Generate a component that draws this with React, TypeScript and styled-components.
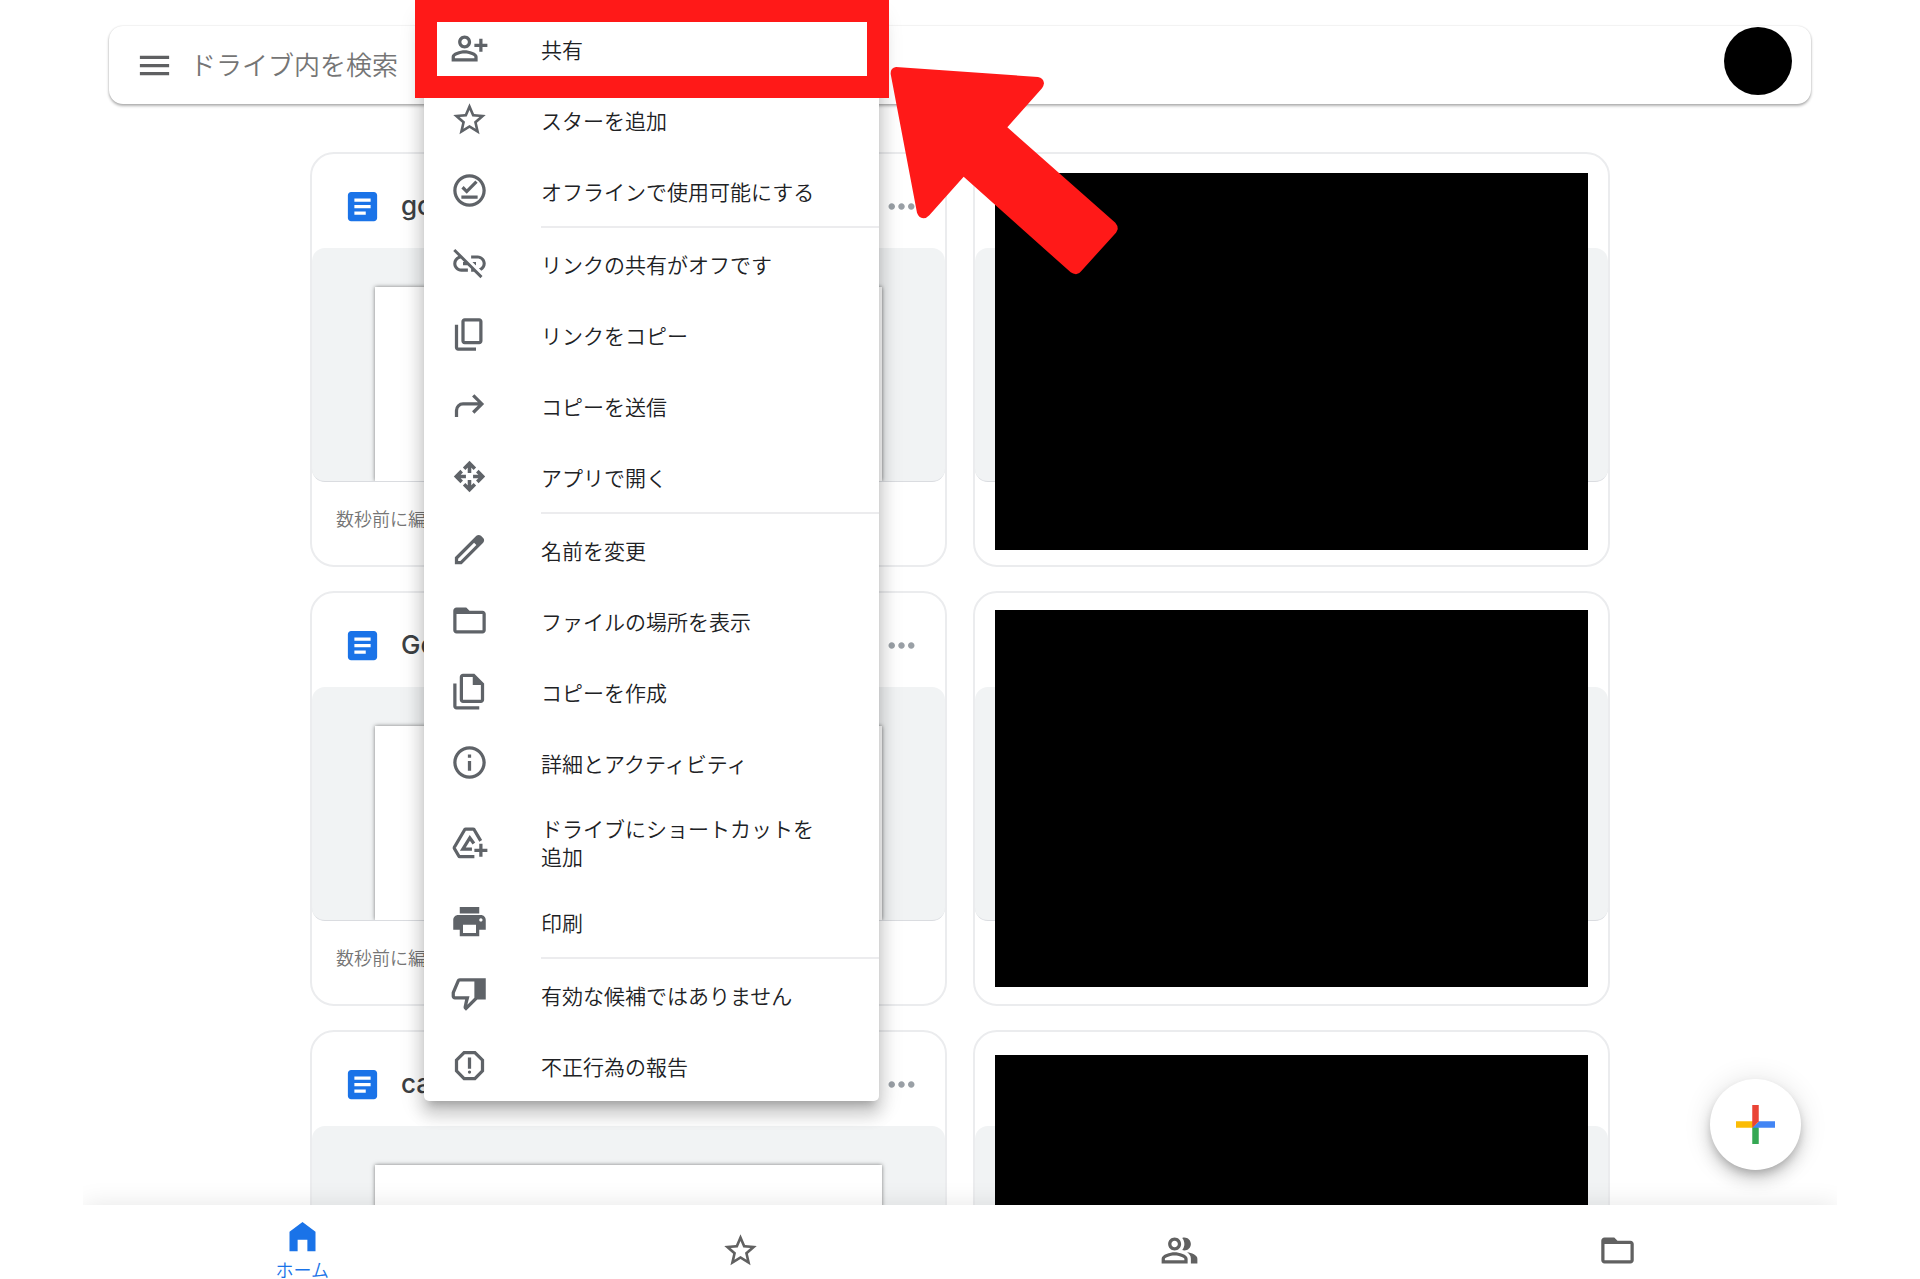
import React from "react";
import styled, { createGlobalStyle, css } from "styled-components";

const GlobalStyle = createGlobalStyle`
  *, *::before, *::after {
    box-sizing: border-box;
  }

  body {
    margin: 0;
    background: #fff;
    color: #202124;
    font-family: "Noto Sans CJK JP", sans-serif;
  }

  button, input {
    margin: 0;
    padding: 0;
    border: 0;
    background: none;
    color: inherit;
    font: inherit;
  }

  button {
    cursor: pointer;
  }
`;

const person =
  "M9 12c2.21 0 4-1.79 4-4s-1.79-4-4-4-4 1.79-4 4 1.79 4 4 4zm0-6c1.1 0 2 .9 2 2s-.9 2-2 2-2-.9-2-2 .9-2 2-2zm0 7c-2.67 0-8 1.34-8 4v3h16v-3c0-2.66-5.33-4-8-4zm6 5H3v-.99C3.2 16.29 6.3 15 9 15s5.8 1.29 6 2v1z";

const icons = {
  menu: <path d="M3 18h18v-2H3v2zm0-5h18v-2H3v2zm0-7v2h18V6H3z" />,
  share: <path d={`${person}M20 9V6h-2v3h-3v2h3v3h2v-3h3V9z`} />,
  star: (
    <path d="M22 9.24l-7.19-.62L12 2 9.19 8.63 2 9.24l5.46 4.73L5.82 21 12 17.27 18.18 21l-1.63-7.03L22 9.24zM12 15.4l-3.76 2.27 1-4.28-3.32-2.88 4.38-.38L12 6.1l1.71 4.04 4.38.38-3.32 2.88 1 4.28L12 15.4z" />
  ),
  offline: (
    <path d="M12 2C6.5 2 2 6.5 2 12s4.5 10 10 10 10-4.5 10-10S17.5 2 12 2zm0 18c-4.42 0-8-3.58-8-8s3.58-8 8-8 8 3.58 8 8-3.58 8-8 8zm-5-5h10v2H7zm3.3-3.8L8.4 9.3 7 10.7l3.3 3.3L17 7.3l-1.4-1.4z" />
  ),
  linkOff: (
    <path d="M17 7h-4v1.9h4c1.71 0 3.1 1.39 3.1 3.1 0 1.43-.98 2.63-2.31 2.98l1.46 1.46C20.88 15.61 22 13.95 22 12c0-2.76-2.24-5-5-5zm-1 4h-2.19l2 2H16v-2zM2 4.27l3.11 3.11C3.29 8.12 2 9.91 2 12c0 2.76 2.24 5 5 5h4v-1.9H7c-1.71 0-3.1-1.39-3.1-3.1 0-1.59 1.21-2.9 2.76-3.07L8.73 11H8v2h2.73L13 15.27V17h1.73l4.01 4L20 19.74 3.27 3 2 4.27z" />
  ),
  copyLink: (
    <path d="M9 18c-1.1 0-2-.9-2-2V4c0-1.1.9-2 2-2h9c1.1 0 2 .9 2 2v12c0 1.1-.9 2-2 2H9zm0-2h9V4H9v12zm-4 6c-1.1 0-2-.9-2-2V6h2v14h11v2H5z" />
  ),
  send: (
    <path d="M3 19v-4q0-2.075 1.463-3.538T8 10h9.175l-3.6-3.6L15 5l6 6-6 6-1.425-1.4 3.6-3.6H8q-1.25 0-2.125.875T5 15v4z" />
  ),
  openWith: (
    <path
      d="M12 9.8V4M8.7 7.2L12 3.9l3.3 3.3M12 14.2V20M8.7 16.8l3.3 3.3 3.3-3.3M9.8 12H4M7.2 8.7L3.9 12l3.3 3.3M14.2 12H20M16.8 8.7l3.3 3.3-3.3 3.3"
      fill="none"
      stroke="currentColor"
      strokeWidth="2.2"
    />
  ),
  rename: (
    <path d="M20.41 4.94l-1.35-1.35c-.78-.78-2.05-.78-2.83 0L3 16.82V21h4.18L20.41 7.77c.79-.78.79-2.05 0-2.83zm-14 14.12L5 19v-1.36l9.82-9.82 1.41 1.41-9.82 9.83z" />
  ),
  folder: (
    <path d="M20 6h-8l-2-2H4c-1.1 0-1.99.9-1.99 2L2 18c0 1.1.9 2 2 2h16c1.1 0 2-.9 2-2V8c0-1.1-.9-2-2-2zm0 12H4V8h16v10z" />
  ),
  duplicate: (
    <path d="M15 1H8c-1.1 0-2 .9-2 2v14c0 1.1.9 2 2 2h11c1.1 0 2-.9 2-2V7l-6-6zM8 17V3h6v5h5v9H8zM4 7H2v14c0 1.1.9 2 2 2h14v-2H4V7z" />
  ),
  info: (
    <path d="M11 7h2v2h-2zm0 4h2v6h-2zm1-9C6.48 2 2 6.48 2 12s4.48 10 10 10 10-4.48 10-10S17.52 2 12 2zm0 18c-4.41 0-8-3.59-8-8s3.59-8 8-8 8 3.59 8 8-3.59 8-8 8z" />
  ),
  shortcut: (
    <path
      d="M18.9 11L14.8 4q-.2-.3-.6-.3H9.7q-.4 0-.6.3L2.7 14.9q-.2.4 0 .8l2.7 4.6q.2.4.6.4H15M14.7 12.6l-2.5-3.4-4.3 6.9h5.6M19 12.8v8M15 16.8h8"
      fill="none"
      stroke="currentColor"
      strokeWidth="2"
    />
  ),
  print: (
    <path d="M19 8H5c-1.66 0-3 1.34-3 3v6h4v4h12v-4h4v-6c0-1.66-1.34-3-3-3zm-3 11H8v-5h8v5zm3-7c-.55 0-1-.45-1-1s.45-1 1-1 1 .45 1 1-.45 1-1 1zm-1-9H6v4h12V3z" />
  ),
  thumbDown: (
    <path
      fillRule="evenodd"
      d="M22 2H6c-.83 0-1.54.5-1.84 1.22l-3.02 7.05c-.09.23-.14.47-.14.73v2c0 1.1.9 2 2 2h6.31l-.95 4.57-.03.32c0 .41.17.79.44 1.06L9.83 22l7-7H22V2zm-7 12l-4.34 4.34L12 13H3v-2l3-7h9v10z"
    />
  ),
  report: (
    <path d="M15.73 3H8.27L3 8.27v7.46L8.27 21h7.46L21 15.73V8.27L15.73 3zM19 14.9L14.9 19H9.1L5 14.9V9.1L9.1 5h5.8L19 9.1v5.8zM11 7h2v7h-2zM12 15a1 1 0 1 0 0 2 1 1 0 1 0 0-2z" />
  ),
  doc: (
    <path d="M19 3H5c-1.1 0-2 .9-2 2v14c0 1.1.9 2 2 2h14c1.1 0 2-.9 2-2V5c0-1.1-.9-2-2-2zm-5 14H7v-2h7v2zm3-4H7v-2h10v2zm0-4H7V7h10v2z" />
  ),
  more: (
    <path d="M6 10c-1.1 0-2 .9-2 2s.9 2 2 2 2-.9 2-2-.9-2-2-2zm12 0c-1.1 0-2 .9-2 2s.9 2 2 2 2-.9 2-2-.9-2-2-2zm-6 0c-1.1 0-2 .9-2 2s.9 2 2 2 2-.9 2-2-.9-2-2-2z" />
  ),
  home: <path d="M4 9v12h5v-7h6v7h5V9l-8-6z" />,
  people: (
    <path
      d={`${person}M16.67 13.13C18.04 14.06 19 15.32 19 17v3h4v-3c0-2.18-3.57-3.47-6.33-3.87zM15 12c2.21 0 4-1.79 4-4s-1.79-4-4-4c-.47 0-.91.1-1.33.24C14.5 5.27 15 6.58 15 8s-.5 2.73-1.33 3.76c.42.14.86.24 1.33.24z`}
    />
  ),
};

type IconName = keyof typeof icons;

const Svg = styled.svg`
  display: block;
  flex: none;
  width: 39px;
  height: 39px;
  fill: currentColor;
`;

function Icon({ name }: { name: IconName }) {
  return (
    <Svg viewBox="0 0 24 24" aria-hidden="true">
      {icons[name]}
    </Svg>
  );
}

const Page = styled.div`
  height: 100vh;
  padding: 0 83px;
`;

const Screen = styled.div`
  position: relative;
  display: flex;
  flex-direction: column;
  height: 100%;
  overflow: hidden;
`;

const SearchBar = styled.header`
  display: flex;
  flex: none;
  align-items: center;
  gap: 16px;
  height: 78px;
  margin: 26px 26px 0;
  padding: 0 19px 0 26px;
  border-radius: 14px;
  box-shadow: 0 2px 3px rgba(0, 0, 0, 0.3), 0 0 2px rgba(0, 0, 0, 0.14);
`;

const MenuButton = styled.button`
  color: #5f6062;
`;

const SearchInput = styled.input`
  flex: 1;
  min-width: 0;
  height: 100%;
  padding-bottom: 4px;
  font-size: 26px;
  font-weight: 350;
  outline: none;

  &::placeholder {
    color: #757575;
    opacity: 1;
  }
`;

const Avatar = styled.button`
  align-self: flex-start;
  width: 68px;
  height: 68px;
  margin-top: 1px;
  border-radius: 50%;
  background: #000;
`;

const Content = styled.main`
  flex: 1;
  min-height: 0;
  padding: 48px 26px 0;
  overflow: hidden;
`;

const CardGrid = styled.div`
  display: grid;
  grid-template-columns: repeat(2, minmax(0, 1fr));
  gap: 24px 26px;
  max-width: 1300px;
  margin: 0 auto;
`;

const Card = styled.article`
  position: relative;
  border: 2px solid #ebecee;
  border-radius: 24px;
`;

const CardHeader = styled.div`
  display: flex;
  align-items: center;
  gap: 19px;
  height: 94px;
  padding: 10px 24px 0 31px;
  color: #1a73e8;
`;

const CardTitle = styled.h2`
  flex: 1;
  margin: 0;
  color: #3c4043;
  font-family: Inter, sans-serif;
  font-size: 26px;
  font-weight: 500;
  line-height: 36px;
`;

const MoreButton = styled.button`
  color: #9aa0a6;
`;

const Thumbnail = styled.div`
  height: 234px;
  padding: 39px 63px 0;
  border-bottom: 1px solid #dadce0;
  border-radius: 13px;
  background: #f1f3f4;
  overflow: hidden;
`;

const Paper = styled.div`
  height: 100%;
  background: #fff;
  box-shadow: 0 0 4px rgba(0, 0, 0, 0.5);
`;

const CardFooter = styled.p`
  height: 83px;
  margin: 0;
  padding: 23px 24px 0;
  color: #757575;
  font-size: 18px;
  font-weight: 350;
  line-height: 27px;
`;

const Redaction = styled.div<{ $top: number }>`
  position: absolute;
  top: ${({ $top }) => $top}px;
  right: 20px;
  left: 20px;
  height: 377px;
  background: #000;
`;

const Menu = styled.ul`
  position: absolute;
  top: 13px;
  left: 341px;
  width: 455px;
  margin: 0;
  padding: 0;
  border-radius: 5px;
  background: #fff;
  box-shadow: 0 8px 8px -5px rgba(0, 0, 0, 0.2),
    0 13px 16px 2px rgba(0, 0, 0, 0.14), 0 5px 23px 3px rgba(0, 0, 0, 0.12);
  list-style: none;
`;

const MenuDivider = styled.li`
  height: 2px;
  margin-left: 117px;
  background: #ececee;
`;

const MenuItem = styled.button`
  display: flex;
  align-items: center;
  gap: 52px;
  width: 100%;
  padding: 16px 52px 16px 26px;
  font-size: 21px;
  font-weight: 350;
  line-height: 28px;
  text-align: left;

  svg {
    color: #5f6368;
  }
`;

const annotationColor = "#ff1918";

const Highlight = styled.div`
  position: absolute;
  top: -13px;
  right: -10px;
  left: -9px;
  height: 98px;
  border: 22px solid ${annotationColor};
  pointer-events: none;
`;

const Arrow = styled.svg`
  position: absolute;
  top: 66px;
  left: 807px;
  width: 230px;
  height: 210px;
  fill: ${annotationColor};
  pointer-events: none;
`;

const Fab = styled.button`
  position: absolute;
  right: 36px;
  bottom: 109px;
  display: flex;
  align-items: center;
  justify-content: center;
  width: 91px;
  height: 91px;
  border-radius: 50%;
  background: #fff;
  box-shadow: 0 5px 8px -2px rgba(0, 0, 0, 0.2),
    0 10px 16px rgba(0, 0, 0, 0.14), 0 2px 29px rgba(0, 0, 0, 0.12);
`;

const BottomNav = styled.nav`
  position: relative;
  display: grid;
  flex: none;
  grid-template-columns: repeat(4, 1fr);
  height: 74px;
  background: #fff;
  box-shadow: 0 0 26px rgba(0, 0, 0, 0.1);
`;

const NavLink = styled.a<{ $active?: boolean }>`
  display: flex;
  flex-direction: column;
  align-items: center;
  gap: 4px;
  padding-top: 26px;
  color: #616161;
  font-size: 18px;
  font-weight: 350;
  line-height: 18px;
  text-decoration: none;

  ${({ $active }) =>
    $active &&
    css`
      padding-top: 12px;
      color: #1a73e8;
    `}
`;

type Entry = { icon: IconName; label: string; divider?: boolean };

const menuEntries: Entry[] = [
  { icon: "share", label: "共有" },
  { icon: "star", label: "スターを追加" },
  { icon: "offline", label: "オフラインで使用可能にする", divider: true },
  { icon: "linkOff", label: "リンクの共有がオフです" },
  { icon: "copyLink", label: "リンクをコピー" },
  { icon: "send", label: "コピーを送信" },
  { icon: "openWith", label: "アプリで開く", divider: true },
  { icon: "rename", label: "名前を変更" },
  { icon: "folder", label: "ファイルの場所を表示" },
  { icon: "duplicate", label: "コピーを作成" },
  { icon: "info", label: "詳細とアクティビティ" },
  { icon: "shortcut", label: "ドライブにショートカットを追加" },
  { icon: "print", label: "印刷", divider: true },
  { icon: "thumbDown", label: "有効な候補ではありません" },
  { icon: "report", label: "不正行為の報告" },
];

const rows = [
  { title: "go", caption: "数秒前に編集", redactionTop: 19 },
  { title: "Go", caption: "数秒前に編集", redactionTop: 17 },
  { title: "ca", redactionTop: 23 },
];

function FileCard({ title, caption }: { title: string; caption?: string }) {
  return (
    <Card>
      <CardHeader>
        <Icon name="doc" />
        <CardTitle>{title}</CardTitle>
        <MoreButton type="button" aria-label="その他の操作">
          <Icon name="more" />
        </MoreButton>
      </CardHeader>
      <Thumbnail>
        <Paper />
      </Thumbnail>
      <CardFooter>{caption}</CardFooter>
    </Card>
  );
}

function RedactedCard({ top }: { top: number }) {
  return (
    <Card>
      <CardHeader />
      <Thumbnail />
      <CardFooter />
      <Redaction $top={top} />
    </Card>
  );
}

function ContextMenu() {
  return (
    <Menu role="menu">
      {menuEntries.map(({ icon, label, divider }) => (
        <React.Fragment key={label}>
          <li role="none">
            <MenuItem type="button" role="menuitem">
              <Icon name={icon} />
              <span>{label}</span>
            </MenuItem>
          </li>
          {divider && <MenuDivider role="separator" />}
        </React.Fragment>
      ))}
      <Highlight as="li" role="none" />
    </Menu>
  );
}

export default function App() {
  return (
    <Page>
      <GlobalStyle />
      <Screen>
        <SearchBar>
          <MenuButton type="button" aria-label="メニュー">
            <Icon name="menu" />
          </MenuButton>
          <SearchInput
            type="text"
            aria-label="ドライブ内を検索"
            placeholder="ドライブ内を検索"
          />
          <Avatar type="button" aria-label="アカウント" />
        </SearchBar>

        <Content>
          <CardGrid>
            {rows.map(({ title, caption, redactionTop }) => (
              <React.Fragment key={title}>
                <FileCard title={title} caption={caption} />
                <RedactedCard top={redactionTop} />
              </React.Fragment>
            ))}
          </CardGrid>
        </Content>

        <BottomNav>
          <NavLink href="#home" $active>
            <Icon name="home" />
            <span>ホーム</span>
          </NavLink>
          <NavLink href="#starred" aria-label="スター付き">
            <Icon name="star" />
          </NavLink>
          <NavLink href="#shared" aria-label="共有中">
            <Icon name="people" />
          </NavLink>
          <NavLink href="#files" aria-label="ファイル">
            <Icon name="folder" />
          </NavLink>
        </BottomNav>

        <Fab type="button" aria-label="新規">
          <Svg viewBox="6 6 24 24" aria-hidden="true">
            <path fill="#34a853" d="M16 16v14h4V20z" />
            <path fill="#4285f4" d="M30 16H20l-4 4h14z" />
            <path fill="#fbbc05" d="M6 16v4h10l4-4z" />
            <path fill="#ea4335" d="M20 16V6h-4v14z" />
          </Svg>
        </Fab>

        <ContextMenu />
        <Arrow viewBox="90 198 690 630" aria-hidden="true">
          <path d="M108 201L534 231Q550 233 552 250Q551 258 546 265L442 382L766 668Q774 677 773 688Q771 693 768 698L664 813Q658 822 648 823Q639 822 632 817L311 530L208 646Q200 655 190 655Q176 653 171 638L92 222Q91 203 108 201z" />
        </Arrow>
      </Screen>
    </Page>
  );
}
